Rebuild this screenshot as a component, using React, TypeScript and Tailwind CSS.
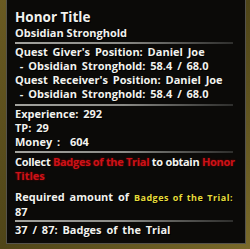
const Sep = ({ className }: { className: string }) => (
  <div className={`h-[2px] w-[218px] bg-gradient-to-r from-[#a3a39e] via-[#8a8a86] to-[#2e2e2c] ${className}`} />
);

const Red = ({ children }: { children: React.ReactNode }) => (
  <span className="text-[#cc1218] [text-shadow:0_0_2px_#700]">{children}</span>
);

export default function App() {
  return (
    <div className="w-[250px] h-[249px] overflow-hidden bg-gradient-to-br from-[#6a5a22] via-[#4f4518] to-[#7a6a2a] flex">
      <div className="ml-[6px] w-[240px] h-[244px] bg-[#0b0a08] border border-[#55534c] border-t-0 pl-[8px] pt-[9px] font-['Open_Sans',sans-serif] font-bold text-[11px] leading-[14px] [word-spacing:2px] text-[#f2f2ee] [text-shadow:1px_1px_0_#000]">
        <div className="text-[13.5px] leading-[16px] [word-spacing:0px]">Honor Title</div>
        <div className="text-[11px] leading-[15px] [word-spacing:0px]">Obsidian Stronghold</div>
        <Sep className="mt-[2px] mb-[1px]" />
        <div>Quest Giver's Position: Daniel Joe</div>
        <div>&nbsp;- Obsidian Stronghold: 58.4 / 68.0</div>
        <div>Quest Receiver's Position: Daniel Joe</div>
        <div>&nbsp;- Obsidian Stronghold: 58.4 / 68.0</div>
        <Sep className="mt-[3px] mb-[1px]" />
        <div>Experience: 292</div>
        <div>TP: 29</div>
        <div>Money :&nbsp; 604</div>
        <Sep className="mt-[2px] mb-[2px]" />
        <div className="whitespace-nowrap [word-spacing:0px] tracking-[-0.3px]">
          Collect <Red>Badges of the Trial</Red> to obtain <Red>Honor</Red>
        </div>
        <div>
          <Red>Titles</Red>
        </div>
        <div className="h-[7px]" />
        <div>
          Required amount of{' '}
          <span className="text-[#e6dc3a] tracking-[0.5px] text-[9px] [word-spacing:1px]">Badges of the Trial:</span>
        </div>
        <div>87</div>
        <Sep className="mt-[1px] mb-[1px]" />
        <div>37 / 87: Badges of the Trial</div>
      </div>
    </div>
  );
}
